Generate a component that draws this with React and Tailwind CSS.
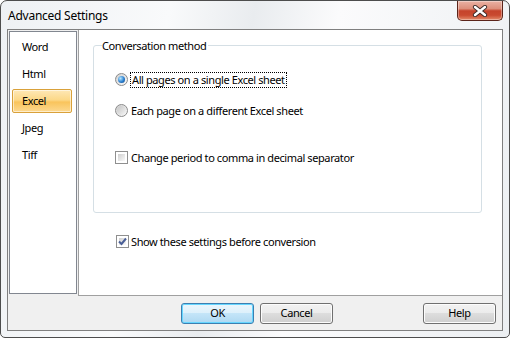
import React from 'react';

const font = { fontFamily: '"Noto Sans", "Open Sans", sans-serif' };

function Radio({ checked }) {
  return (
    <span className="w-[13px] h-[13px] rounded-full border border-[#8b8b8b] bg-gradient-to-br from-[#d0d0d0] to-[#fbfbfb] flex items-center justify-center shrink-0">
      {checked ? (
        <span className="w-[7px] h-[7px] rounded-full bg-[radial-gradient(circle_at_35%_35%,#b8e8ff,#2a7fd0_55%,#0d3f7a)]" />
      ) : (
        <span className="w-[9px] h-[9px] rounded-full bg-gradient-to-br from-[#c4c4c4] to-[#f6f6f6]" />
      )}
    </span>
  );
}

function Checkbox({ checked }) {
  return (
    <span className="w-[13px] h-[13px] border border-[#8f8f8f] bg-white p-[2px] flex shrink-0">
      <span className="flex-1 bg-gradient-to-br from-[#cfcfcf] to-[#fafafa] relative">
        {checked && (
          <svg className="absolute -left-[1px] -top-[1px]" width="9" height="9" viewBox="0 0 9 9">
            <path d="M1 4.5 L3.5 7 L8 1.5" fill="none" stroke="#4a5f97" strokeWidth="2" />
          </svg>
        )}
      </span>
    </span>
  );
}

function Button({ children, focused, className = '' }) {
  const base = 'w-[73px] h-[21px] rounded-[3px] flex items-center justify-center text-[11px] text-black';
  const look = focused
    ? 'border border-[#3c7fb1] shadow-[inset_0_0_0_1px_#66d6ff] bg-[linear-gradient(#ecf6fc_0%,#dcf0fb_50%,#c4e5f8_50%,#aed8f2_100%)]'
    : 'border border-[#707070] shadow-[inset_0_0_0_1px_#fcfcfc] bg-[linear-gradient(#f2f2f2_0%,#ebebeb_50%,#dddddd_50%,#cfcfcf_100%)]';
  return <div className={`${base} ${look} ${className}`}>{children}</div>;
}

export default function App() {
  const items = ['Word', 'Html', 'Excel', 'Jpeg', 'Tiff'];

  return (
    <div
      className="w-[510px] h-[338px] relative border border-[#4d4d4d] rounded-t-[7px] rounded-b-[5px] px-[6px] pb-[6px] bg-[linear-gradient(100deg,#eef1f4_0%,#f9fafb_30%,#e9ecef_45%,#fbfbfc_60%,#eceff2_100%)] flex flex-col"
      style={font}
    >
      {/* Title bar */}
      <div className="h-[28px] flex items-center pl-[1px] pt-[2px] text-[12px] tracking-[-0.25px] text-black">
        Advanced Settings
      </div>

      {/* Close button */}
      <div className="absolute top-0 right-[6px] w-[46px] h-[20px] rounded-b-[5px] border border-t-0 border-[#5b241a] bg-[linear-gradient(#eab2a4_0%,#dd8f7b_40%,#c5432b_52%,#c94a30_75%,#e48c6c_100%)] shadow-[inset_0_0_0_1px_rgba(255,255,255,0.35)] flex items-center justify-center">
        <svg width="16" height="12" viewBox="0 0 16 12">
          <path d="M3 2 L13 10 M13 2 L3 10" stroke="#3b2a28" strokeWidth="4.2" strokeLinecap="round" />
          <path d="M3 2 L13 10 M13 2 L3 10" stroke="#ffffff" strokeWidth="2.4" strokeLinecap="round" />
        </svg>
      </div>

      {/* Client area */}
      <div className="w-[496px] h-[302px] border border-[#7f7f7f] bg-[#f0f0f0] flex flex-col text-[11px] tracking-[-0.4px] text-black">
        <div className="h-[266px] flex">
          {/* Category list */}
          <div className="mt-[1px] ml-[1px] w-[68px] h-[263px] border border-[#828790] bg-white pt-[3px] flex flex-col gap-[3px]">
            {items.map((it) => (
              <div
                key={it}
                className={
                  it === 'Excel'
                    ? 'ml-[2px] w-[60px] h-[24px] flex items-center pl-[9px] rounded-[2px] border border-[#d9a13a] shadow-[inset_0_0_0_1px_rgba(255,255,255,0.55)] bg-[linear-gradient(#fee8b6_0%,#fcd888_45%,#f9c45c_55%,#fdd990_100%)]'
                    : 'ml-[2px] w-[60px] h-[24px] flex items-center pl-[10px]'
                }
              >
                {it}
              </div>
            ))}
          </div>

          {/* Settings panel */}
          <div className="ml-[1px] flex-1 border-l border-b border-[#a0a0a0] bg-white flex flex-col">
            <fieldset className="mt-[8px] ml-[14px] w-[389px] h-[175px] border border-[#d5dfe5] rounded-[3px] pl-[8px]">
              <legend className="pr-[2px] leading-[15px] text-[11px]">Conversation method</legend>
              <div className="pl-[13px] flex flex-col">
                <div className="mt-[18px] h-[17px] flex items-center gap-[2px]">
                  <Radio checked />
                  <span className="border border-dotted border-black px-[1px] leading-[14px]">
                    All pages on a single Excel sheet
                  </span>
                </div>
                <div className="mt-[14px] h-[17px] flex items-center gap-[3px]">
                  <Radio />
                  <span className="leading-[14px]">Each page on a different Excel sheet</span>
                </div>
                <div className="mt-[30px] h-[17px] flex items-center gap-[3px]">
                  <Checkbox />
                  <span className="leading-[14px]">Change period to comma in decimal separator</span>
                </div>
              </div>
            </fieldset>

            <div className="mt-[20px] ml-[37px] h-[17px] flex items-center gap-[2px]">
              <Checkbox checked />
              <span className="leading-[14px]">Show these settings before conversion</span>
            </div>
          </div>
        </div>

        {/* Buttons */}
        <div className="flex-1 flex items-start pt-[7px] pl-[173px] pr-[6px]">
          <Button focused>OK</Button>
          <Button className="ml-[6px]">Cancel</Button>
          <Button className="ml-auto">Help</Button>
        </div>
      </div>
    </div>
  );
}
